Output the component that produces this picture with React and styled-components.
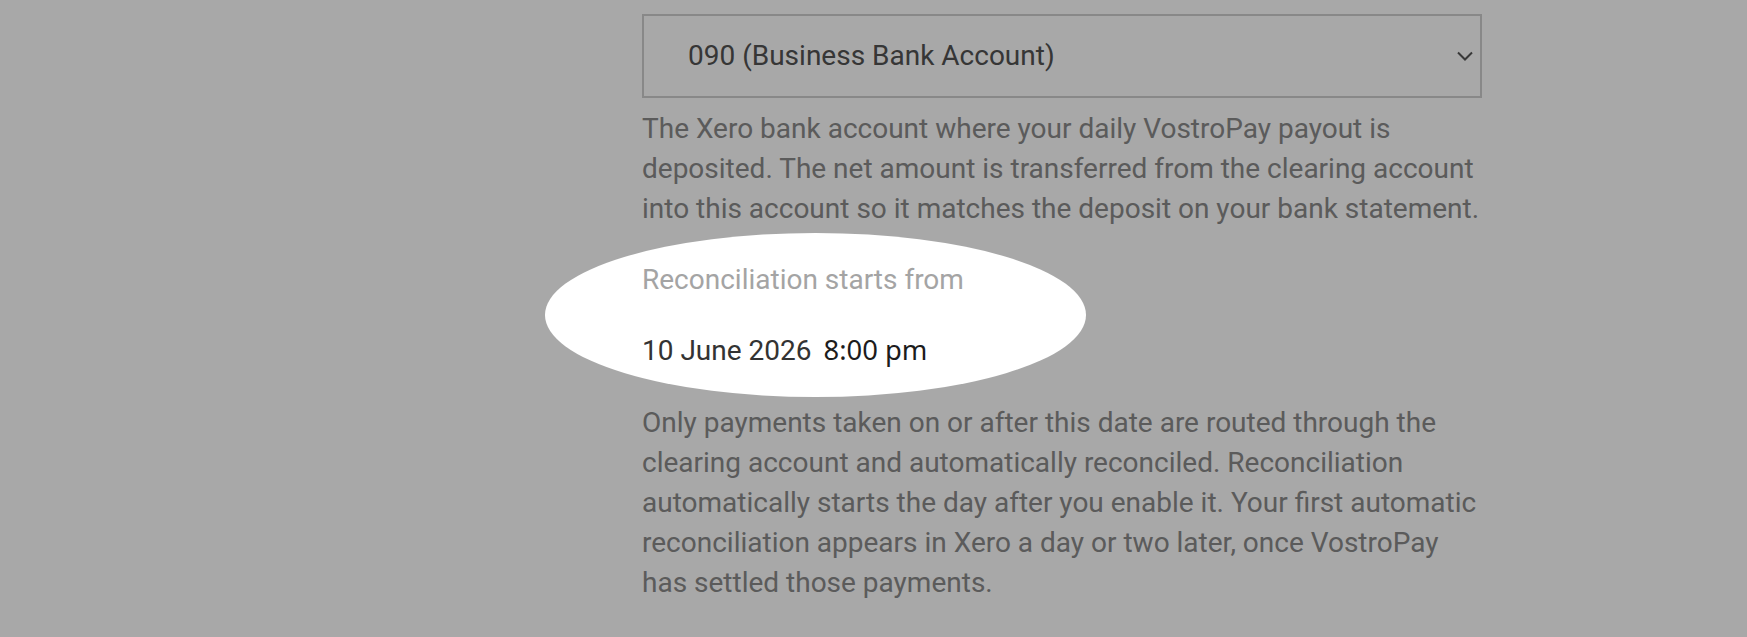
import React from 'react';
import styled, { createGlobalStyle } from 'styled-components';

const GlobalStyle = createGlobalStyle`
  html, body {
    margin: 0;
    padding: 0;
    background: #ffffff;
    overflow: hidden;
  }
  body {
    font-family: Roboto, "Liberation Sans", Arial, sans-serif;
  }
`;

const Page = styled.div`
  position: relative;
  width: 1747px;
  height: 637px;
  overflow: hidden;
  background: #ffffff;
`;

const Column = styled.div`
  width: 840px;
  margin-left: 642px;
  padding-top: 14px;
  font-size: 28px;
  line-height: 40px;
`;

const SelectBox = styled.div`
  box-sizing: border-box;
  height: 84px;
  display: flex;
  align-items: center;
  justify-content: space-between;
  padding: 0 7px 0 44px;
  border: 2px solid #cfcfcf;
  color: #525252;
`;

const SelectValue = styled.span`
  font-size: 28px;
`;

const Help = styled.p`
  margin: ${({ $top }) => $top}px 0 0;
  color: #8a8a8a;
`;

const Field = styled.div`
  position: relative;
  margin-top: 31px;
`;

const FieldLabel = styled.div`
  color: #a4a4a4;
`;

const DateRow = styled.div`
  display: flex;
  align-items: baseline;
  gap: 12px;
  margin-top: 30px;
  height: 40px;
`;

const DateValue = styled.span`
  color: #333333;
`;

const TimeValue = styled.span`
  font-family: "Noto Sans", "Open Sans", sans-serif;
  font-size: 27.4px;
  color: #1c1c1c;
`;

/* spotlight cut-out of the tour overlay */
const Spotlight = styled.div`
  position: absolute;
  left: -97px;
  top: -27px;
  width: 541px;
  height: 164px;
  border-radius: 50%;
  box-shadow: 0 0 0 3000px rgba(0, 0, 0, 0.34);
  pointer-events: none;
  z-index: 10;
`;

const Chevron = () => (
  <svg width="16" height="10" viewBox="0 0 16 10" fill="none">
    <path d="M1 1.5 L8 8.5 L15 1.5" stroke="#555" strokeWidth="2" />
  </svg>
);

export default function App() {
  return (
    <Page>
      <GlobalStyle />
      <Column>
        <SelectBox>
          <SelectValue>090 (Business Bank Account)</SelectValue>
          <Chevron />
        </SelectBox>
        <Help $top={11}>
          The Xero bank account where your daily VostroPay payout is
          deposited. The net amount is transferred from the clearing account
          into this account so it matches the deposit on your bank statement.
        </Help>
        <Field>
          <Spotlight />
          <FieldLabel>Reconciliation starts from</FieldLabel>
          <DateRow>
            <DateValue>10 June 2026</DateValue>
            <TimeValue>8:00 pm</TimeValue>
          </DateRow>
        </Field>
        <Help $top={33}>
          Only payments taken on or after this date are routed through the
          clearing account and automatically reconciled. Reconciliation
          automatically starts the day after you enable it. Your first
          automatic reconciliation appears in Xero a day or two later, once
          VostroPay has settled those payments.
        </Help>
      </Column>
    </Page>
  );
}
